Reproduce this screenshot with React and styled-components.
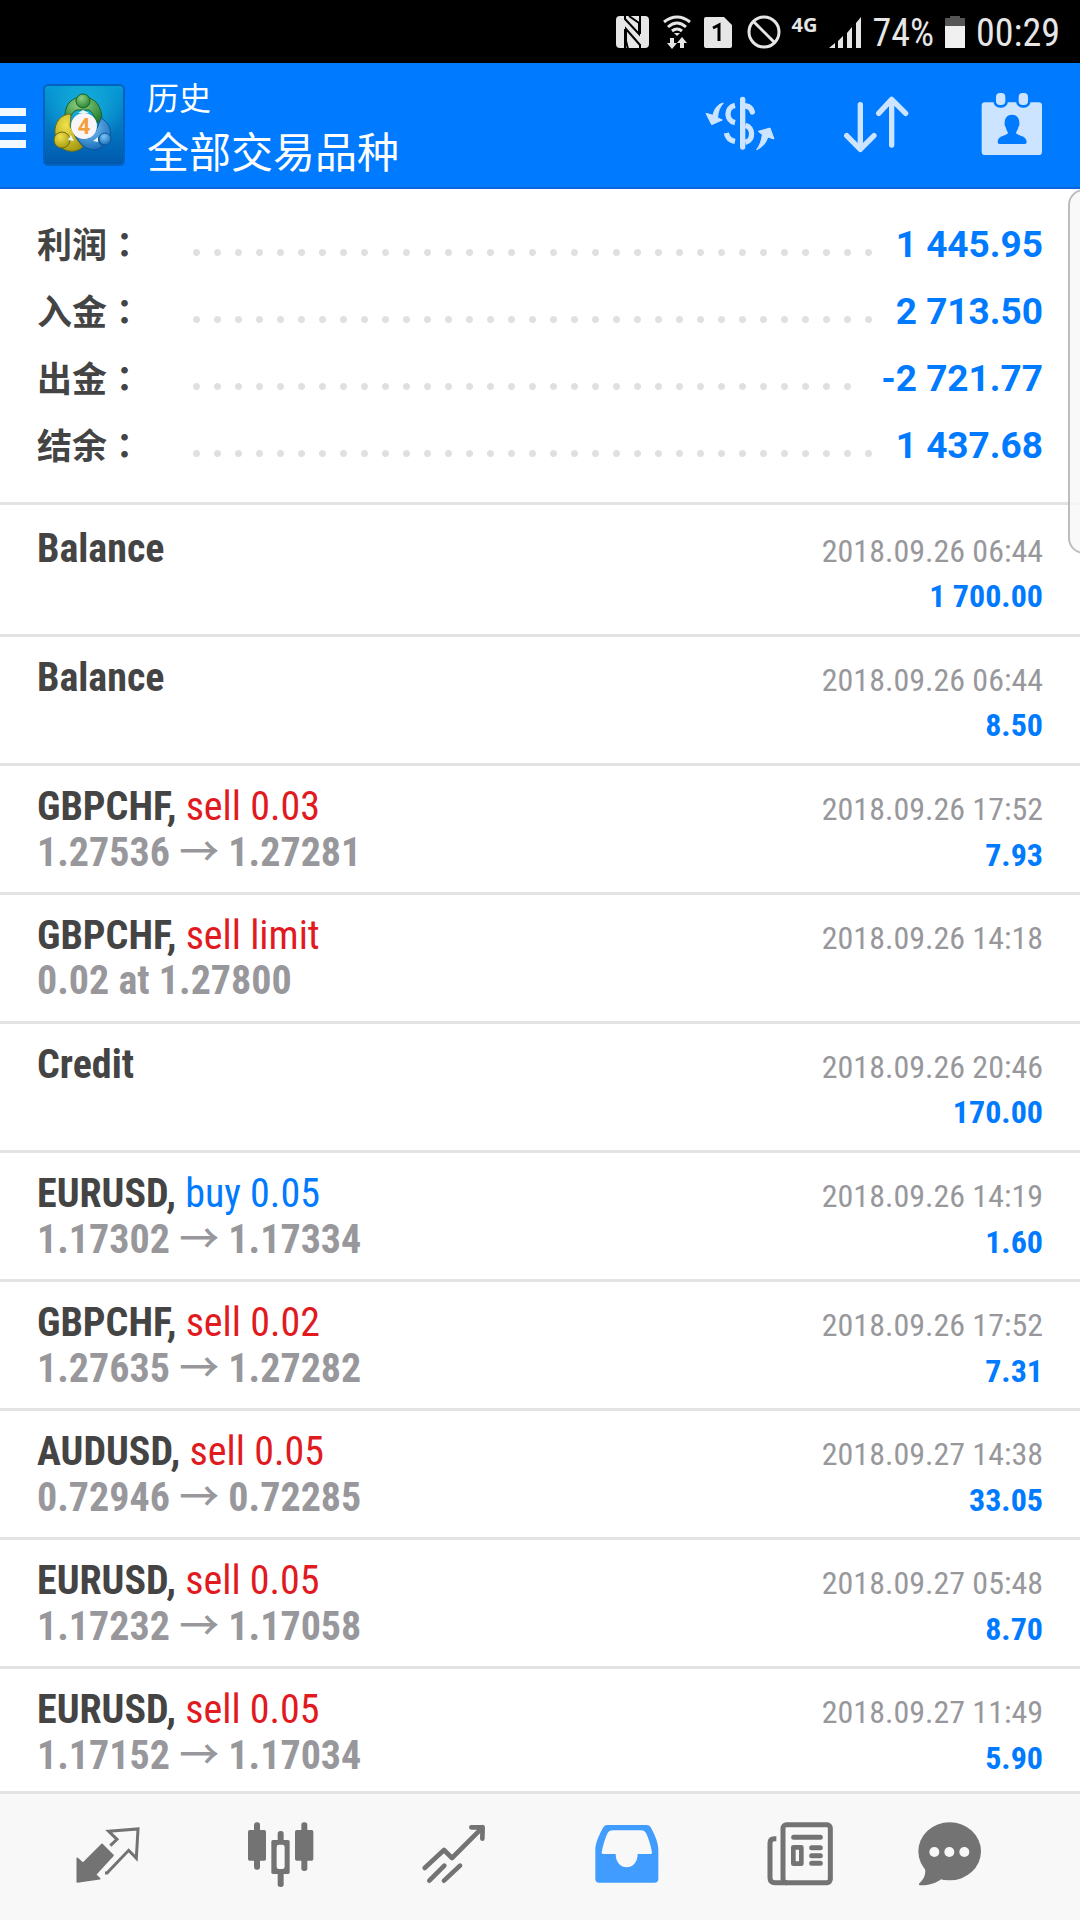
import styled, { createGlobalStyle } from "styled-components";

const summary = [
  { label: "利润", value: "1 445.95" },
  { label: "入金", value: "2 713.50" },
  { label: "出金", value: "-2 721.77" },
  { label: "结余", value: "1 437.68" },
];

const deals = [
  { id: 1, name: "Balance", time: "2018.09.26 06:44", amount: "1 700.00" },
  { id: 2, name: "Balance", time: "2018.09.26 06:44", amount: "8.50" },
  {
    id: 3,
    name: "GBPCHF,",
    type: "sell",
    action: "sell 0.03",
    open: "1.27536",
    close: "1.27281",
    time: "2018.09.26 17:52",
    amount: "7.93",
  },
  {
    id: 4,
    name: "GBPCHF,",
    type: "sell",
    action: "sell limit",
    open: "0.02 at 1.27800",
    time: "2018.09.26 14:18",
  },
  { id: 5, name: "Credit", time: "2018.09.26 20:46", amount: "170.00" },
  {
    id: 6,
    name: "EURUSD,",
    type: "buy",
    action: "buy 0.05",
    open: "1.17302",
    close: "1.17334",
    time: "2018.09.26 14:19",
    amount: "1.60",
  },
  {
    id: 7,
    name: "GBPCHF,",
    type: "sell",
    action: "sell 0.02",
    open: "1.27635",
    close: "1.27282",
    time: "2018.09.26 17:52",
    amount: "7.31",
  },
  {
    id: 8,
    name: "AUDUSD,",
    type: "sell",
    action: "sell 0.05",
    open: "0.72946",
    close: "0.72285",
    time: "2018.09.27 14:38",
    amount: "33.05",
  },
  {
    id: 9,
    name: "EURUSD,",
    type: "sell",
    action: "sell 0.05",
    open: "1.17232",
    close: "1.17058",
    time: "2018.09.27 05:48",
    amount: "8.70",
  },
  {
    id: 10,
    name: "EURUSD,",
    type: "sell",
    action: "sell 0.05",
    open: "1.17152",
    close: "1.17034",
    time: "2018.09.27 11:49",
    amount: "5.90",
  },
];

function StatusBar() {
  return (
    <StyledStatusBar>
      <svg width="33" height="34" viewBox="0 0 33 34">
        <rect x="0" y="1" width="33" height="32" rx="4" fill="#e6e6e6" />
        <path
          d="M9 0V4L23 19V8L13 1M24 34V30L10 14V26L12 34"
          fill="none"
          stroke="#000"
          strokeWidth="2"
        />
        <path d="M24 1V19M9 14V33" fill="none" stroke="#000" strokeWidth="2" />
      </svg>
      <svg width="33" height="34" viewBox="-3 0 33 34" fill="none" stroke="#e6e6e6" strokeWidth="3">
        <path d="M1 7Q14 -3 27 7M5 12Q14 4 23 12M9 16Q14 12 19 16" />
        <path d="M11 18H17L14 21Z" fill="#e6e6e6" stroke="none" />
        <path d="M7 23H11V28H14L9 34L4 28H7ZM17 33H21V28H24L19 22L14 28H17Z" fill="#e6e6e6" stroke="none" />
      </svg>
      <svg width="28" height="34" viewBox="0 0 28 34">
        <path d="M2 2H20L28 10V31Q28 33 26 33H2Q0 33 0 31V4Q0 2 2 2Z" fill="#e6e6e6" />
        <path d="M9 13L15 10V26" fill="none" stroke="#000" strokeWidth="3" />
      </svg>
      <svg width="38" height="34" viewBox="-4 0 38 34" fill="none" stroke="#e6e6e6" strokeWidth="3">
        <circle cx="17" cy="17" r="15" />
        <path d="M7 7L27 27" />
      </svg>
      <StyledNetwork>4G</StyledNetwork>
      <svg width="33" height="34" viewBox="0 0 33 34" fill="#e6e6e6">
        <path d="M0 33L6 28V33ZM9 26L14 21V33H9ZM18 18L23 12V33H18ZM27 8L32 2V33H27Z" />
      </svg>
      <StyledStatusText>74%</StyledStatusText>
      <svg width="20" height="34" viewBox="0 0 20 34">
        <path d="M0 3H5V1H15V3H20V12H0Z" fill="#555" />
        <path d="M0 11H20V33H0Z" fill="#f0f0f0" />
      </svg>
      <StyledStatusText>00:29</StyledStatusText>
    </StyledStatusBar>
  );
}

function Logo() {
  return (
    <svg width="82" height="82" viewBox="0 0 82 82" role="img" aria-label="MetaTrader 4">
      <defs>
        <linearGradient id="tile" x1="0" y1="0" x2="0" y2="1">
          <stop offset="0" stopColor="#069bd6" />
          <stop offset="1" stopColor="#0058ad" />
        </linearGradient>
        <radialGradient id="glow" cx="0.5" cy="0.3" r="0.5">
          <stop offset="0" stopColor="#18b4dc" />
          <stop offset="1" stopColor="#18b4dc" stopOpacity="0" />
        </radialGradient>
        <radialGradient id="green" cx="0.4" cy="0.3" r="0.8">
          <stop offset="0" stopColor="#8fd080" />
          <stop offset="1" stopColor="#1d7a2c" />
        </radialGradient>
        <radialGradient id="yellow" cx="0.4" cy="0.3" r="0.8">
          <stop offset="0" stopColor="#f0e04c" />
          <stop offset="1" stopColor="#a0960e" />
        </radialGradient>
        <radialGradient id="sky" cx="0.4" cy="0.3" r="0.8">
          <stop offset="0" stopColor="#7cc6f4" />
          <stop offset="1" stopColor="#0f64b4" />
        </radialGradient>
      </defs>
      <rect x="1" y="1" width="80" height="80" rx="4" fill="url(#tile)" stroke="#0362c0" strokeWidth="2" />
      <rect x="2" y="2" width="78" height="78" rx="3" fill="url(#glow)" />
      <g strokeWidth="1" strokeLinejoin="round">
        <path
          d="M22 32C22 20 29 13 40 13C52 13 59 22 59 36L54 39C52 34 49 28 46 26H34C31 27 29 29 28 32Z"
          fill="url(#green)"
          stroke="#17622a"
        />
        <path
          d="M28 30C18 30 11 38 12 50L20 52L25 54L26 60L19 64C26 69 34 68 40 63L33 54L27 42Z"
          fill="url(#yellow)"
          stroke="#756e10"
        />
        <path
          d="M58 34C65 38 69 45 67 53L60 50L55 54L57 60L60 62C51 70 38 64 33 52L46 54L53 47Z"
          fill="url(#sky)"
          stroke="#0e559a"
        />
        <circle cx="40" cy="17" r="7" fill="url(#green)" stroke="#17622a" />
        <circle cx="19" cy="56" r="8" fill="url(#yellow)" stroke="#756e10" />
        <circle cx="62" cy="55" r="6" fill="url(#sky)" stroke="#0e559a" />
      </g>
      <path d="M35 29L40 26L46 29ZM25 56L28 51L31 57ZM50 57L55 53L55 58Z" fill="#e8f4f8" />
      <circle cx="41" cy="42" r="13" fill="#f7f5f8" />
      <text x="41" y="50" textAnchor="middle" fontFamily="Roboto" fontWeight="700" fontSize="22" fill="#f2a03c">
        4
      </text>
    </svg>
  );
}

function HeaderActions() {
  return (
    <StyledActions>
      <StyledIconButton type="button" aria-label="货币">
        <svg width="70" height="70" viewBox="0 0 210 210" fill="none" stroke="currentColor" strokeWidth="16">
          <path d="M113 28V171M123 48Q138 50 142 66" strokeLinecap="round" />
          <path d="M90 46C62 52 62 92 90 98M121 106C146 112 146 152 121 157" />
          <path d="M64 129Q68 150 90 154" />
          <path
            d="M55 39C40 42 28 55 24 76L3 70L20 104L52 90L38 84C38 65 45 50 55 39ZM155 179C172 172 184 158 188 141L207 147L195 114L160 124L172 134C170 152 164 166 155 179Z"
            fill="currentColor"
            strokeWidth="3"
            strokeLinejoin="round"
          />
        </svg>
      </StyledIconButton>
      <StyledIconButton type="button" aria-label="排序">
        <svg
          width="70"
          height="70"
          viewBox="0 0 210 210"
          fill="none"
          stroke="currentColor"
          strokeWidth="16"
          strokeLinecap="round"
          strokeLinejoin="round"
        >
          <path d="M58 44V178M17 137L58 178L99 137M152 165V28M113 70L152 28L194 70" />
        </svg>
      </StyledIconButton>
      <StyledIconButton type="button" aria-label="日期">
        <svg width="70" height="70" viewBox="0 0 210 210" fill="currentColor">
          <rect x="14" y="37" width="181" height="158" rx="10" />
          <g stroke="#007aff" strokeWidth="8">
            <rect x="53" y="5" width="36" height="44" rx="16" />
            <rect x="121" y="5" width="36" height="44" rx="16" />
          </g>
          <path
            fill="#007aff"
            d="M105 74C119 74 127 84 127 98C128 104 127 108 124 111C122 120 119 124 117 128C118 138 149 134 149 156Q149 162 144 162H67Q62 162 62 156C62 134 92 138 93 128C91 124 88 120 86 111C83 108 82 104 83 98C83 84 91 74 105 74Z"
          />
        </svg>
      </StyledIconButton>
    </StyledActions>
  );
}

function BottomNav() {
  return (
    <StyledNav>
      <StyledTab href="#quotes" aria-label="行情">
        <svg width="66" height="66" viewBox="0 0 198 198">
          <path
            d="M7 112L24 127L81 70L114 103L61 161L74 173L7 183Z"
            fill="currentColor"
            stroke="currentColor"
            strokeWidth="5"
            strokeLinejoin="round"
          />
          <path
            d="M90 156H96L161 88L184 112L189 24L101 31L126 55L106 74"
            fill="none"
            stroke="currentColor"
            strokeWidth="9"
          />
        </svg>
      </StyledTab>
      <StyledTab href="#charts" aria-label="图表">
        <svg width="66" height="66" viewBox="0 0 198 198" fill="currentColor">
          <rect x="0" y="27" width="54" height="92" rx="5" />
          <rect x="18" y="4" width="18" height="142" rx="8" />
          <rect x="141" y="27" width="55" height="92" rx="5" />
          <rect x="160" y="4" width="18" height="146" rx="8" />
          <rect x="89" y="30" width="18" height="168" rx="8" />
          <rect x="70" y="57" width="55" height="102" rx="5" />
          <rect x="86" y="71" width="24" height="73" rx="7" fill="#f8f8f8" />
        </svg>
      </StyledTab>
      <StyledTab href="#trade" aria-label="交易">
        <svg
          width="66"
          height="66"
          viewBox="0 0 198 198"
          fill="none"
          stroke="currentColor"
          strokeWidth="14"
          strokeLinecap="round"
          strokeLinejoin="round"
        >
          <path d="M11 141L69 87L93 111L185 19M151 19H185L184 53M25 179L70 134M69 179L117 134" />
        </svg>
      </StyledTab>
      <StyledTab href="#history" aria-label="历史" aria-current="page">
        <svg width="66" height="66" viewBox="0 0 198 198">
          <path
            fill="currentColor"
            fillRule="evenodd"
            d="M40 12H158Q166 12 170 19C182 41 193 64 193 88V173Q193 185 181 185H16Q4 185 4 173V88C4 64 16 41 28 19Q32 12 40 12ZM54 28Q45 28 41 36C33 52 27 72 23 94Q22 99 27 99H65C65 152 131 152 131 99H170Q175 99 174 94C170 72 164 52 156 36Q152 28 143 28Z"
          />
        </svg>
      </StyledTab>
      <StyledTab href="#news" aria-label="新闻">
        <svg width="66" height="66" viewBox="0 0 198 198" fill="none" stroke="currentColor" strokeWidth="15">
          <rect x="48" y="11" width="142" height="174" rx="10" />
          <path d="M28 53H22Q9 53 9 66V170Q9 185 24 185H60" />
          <path d="M80 49H160M134 80H160M134 104H160M134 127H160" strokeLinecap="round" />
          <rect x="79" y="79" width="24" height="49" strokeLinejoin="round" strokeWidth="14" />
        </svg>
      </StyledTab>
      <StyledTab href="#messages" aria-label="消息">
        <svg width="66" height="66" viewBox="0 0 198 198" fill="currentColor">
          <ellipse cx="98" cy="91" rx="94" ry="87" />
          <path d="M24 142C28 162 18 178 6 188Q4 193 10 193C36 192 56 188 74 173Z" />
          <g fill="#f8f8f8">
            <circle cx="52" cy="93" r="15" />
            <circle cx="97" cy="93" r="15" />
            <circle cx="142" cy="93" r="15" />
          </g>
        </svg>
      </StyledTab>
    </StyledNav>
  );
}

export default function App() {
  return (
    <>
      <GlobalStyle />
      <StyledScreen lang="zh-Hans">
        <StatusBar />
        <StyledHeader>
          <StyledMenuButton type="button" aria-label="菜单">
            <span />
            <span />
            <span />
          </StyledMenuButton>
          <Logo />
          <StyledTitles>
            <StyledTitle>历史</StyledTitle>
            <StyledSubtitle>全部交易品种</StyledSubtitle>
          </StyledTitles>
          <HeaderActions />
        </StyledHeader>
        <StyledMain>
          <StyledSummary>
            {summary.map((line) => (
              <StyledSummaryLine key={line.label}>
                <StyledSummaryLabel>
                  {line.label}
                  <StyledColon lang="zh-Hant">：</StyledColon>
                </StyledSummaryLabel>
                <StyledDots />
                <StyledSummaryValue>{line.value}</StyledSummaryValue>
              </StyledSummaryLine>
            ))}
          </StyledSummary>
          <StyledDeals>
            {deals.map((deal) => (
              <StyledDeal key={deal.id}>
                <StyledName>
                  {deal.name}
                  {deal.action && (
                    <StyledAction $type={deal.type}> {deal.action}</StyledAction>
                  )}
                </StyledName>
                <StyledTime>{deal.time}</StyledTime>
                <StyledPrice>
                  {deal.open}
                  {deal.close && (
                    <>
                      {" "}
                      <StyledArrow>→</StyledArrow> {deal.close}
                    </>
                  )}
                </StyledPrice>
                <StyledAmount>{deal.amount}</StyledAmount>
              </StyledDeal>
            ))}
          </StyledDeals>
          <StyledEdgePanel />
        </StyledMain>
        <BottomNav />
      </StyledScreen>
    </>
  );
}

const GlobalStyle = createGlobalStyle`
  * {
    box-sizing: border-box;
  }
  body {
    margin: 0;
    background-color: #fff;
    font-family: "Roboto Condensed", Roboto, "Noto Sans CJK SC", sans-serif;
  }
  svg {
    display: block;
    flex-shrink: 0;
  }
`;

const StyledScreen = styled.div`
  display: flex;
  flex-direction: column;
  height: 100vh;
  overflow: hidden;
`;

const StyledStatusBar = styled.div`
  display: flex;
  align-items: center;
  justify-content: flex-end;
  flex-shrink: 0;
  gap: 11px;
  height: 63px;
  padding-right: 20px;
  background-color: #000;
`;
const StyledStatusText = styled.span`
  padding-top: 2px;
  color: #e6e6e6;
  font-size: 38px;
  line-height: 44px;
`;
const StyledNetwork = styled.span`
  align-self: flex-start;
  padding-top: 14px;
  color: #e6e6e6;
  font-family: "Noto Sans", sans-serif;
  font-size: 20px;
  font-weight: 700;
  line-height: 22px;
`;

const StyledHeader = styled.header`
  display: flex;
  align-items: center;
  flex-shrink: 0;
  height: 126px;
  padding-right: 33px;
  border-bottom: 2px solid #0a66e0;
  background-color: #007aff;
`;
const StyledMenuButton = styled.button`
  display: flex;
  flex-direction: column;
  gap: 8px;
  width: 43px;
  padding: 5px 17px 0 0;
  border: 0;
  background: none;
  cursor: pointer;

  span {
    height: 8px;
    background-color: #f2f8ff;
  }
`;
const StyledTitles = styled.div`
  flex: 1;
  padding: 0 0 5px 22px;
  color: #fff;
  font-family: "Noto Sans CJK SC", sans-serif;
`;
const StyledTitle = styled.h1`
  margin: 0;
  font-size: 32px;
  font-weight: 400;
  line-height: 54px;
`;
const StyledSubtitle = styled.p`
  margin: 0;
  font-size: 42px;
  font-weight: 400;
  line-height: 54px;
`;
const StyledActions = styled.div`
  display: flex;
  gap: 66px;
`;
const StyledIconButton = styled.button`
  padding: 0;
  border: 0;
  background: none;
  color: #cce4ff;
  cursor: pointer;
`;

const StyledMain = styled.main`
  position: relative;
  flex: 1;
  min-height: 0;
  overflow: hidden;
`;
const StyledSummary = styled.dl`
  margin: 0;
  padding: 22px 37px 23px;
  border-bottom: 3px solid #e3e3e3;
`;
const StyledSummaryLine = styled.div`
  display: flex;
  align-items: center;
  height: 67px;
`;
const StyledSummaryLabel = styled.dt`
  width: 149px;
  padding-bottom: 4px;
  color: #444;
  font-family: "Noto Sans CJK SC", sans-serif;
  font-size: 35px;
  font-weight: 600;
  line-height: 50px;
`;
const StyledColon = styled.span`
  font-family: "Noto Sans CJK TC", sans-serif;
`;
const StyledDots = styled.span`
  flex: 1;
  align-self: stretch;

  /* only whole dots, whatever the width of the value */
  &::before {
    content: "";
    display: block;
    width: round(down, 100%, 21px);
    height: 100%;
    background: radial-gradient(circle, #e0e0e0 3px, transparent 4px) 0 31px / 21px 21px repeat-x;
  }
`;
const StyledSummaryValue = styled.dd`
  margin: 0;
  padding-left: 14px;
  color: #007aff;
  font-family: Roboto, sans-serif;
  font-size: 37px;
  font-weight: 700;
  line-height: 50px;
`;

const StyledDeals = styled.ul`
  margin: 0;
  padding: 3px 0 0;
  list-style: none;
`;
const StyledDeal = styled.li`
  display: grid;
  grid-template-columns: 1fr auto;
  grid-template-rows: 45px 45px;
  align-items: baseline;
  padding: 18px 37px;
  border-bottom: 3px solid #e3e3e3;
  line-height: 45px;
`;
const StyledName = styled.span`
  color: #444;
  font-size: 40px;
  font-weight: 700;
`;
const StyledAction = styled.span`
  color: ${(props) => (props.$type === "buy" ? "#007aff" : "#e01a1e")};
  font-weight: 400;
`;
const StyledPrice = styled.span`
  color: #98989c;
  font-size: 40px;
  font-weight: 700;

  /* keeps the baseline of the row when there is no price */
  &::before {
    content: "\\200b";
  }
`;
const StyledArrow = styled.span`
  display: inline-block;
  font-family: "Noto Sans CJK SC", sans-serif;
  font-weight: 500;
  line-height: 1;
`;
const StyledTime = styled.time`
  color: #98989c;
  font-size: 32px;
  text-align: right;
`;
const StyledAmount = styled.span`
  color: #007aff;
  font-size: 32px;
  font-weight: 700;
  text-align: right;
`;

const StyledEdgePanel = styled.div`
  position: absolute;
  top: 0;
  right: -20px;
  width: 32px;
  height: 365px;
  border: 2px solid #bdbdbd;
  border-radius: 18px;
  background-color: rgba(248, 248, 248, 0.8);
`;

const StyledNav = styled.nav`
  display: grid;
  grid-template-columns: repeat(5, 173fr) 128fr;
  flex-shrink: 0;
  height: 129px;
  padding: 0 66px 6px 21px;
  border-top: 3px solid #e3e3e3;
  background-color: #f8f8f8;
`;
const StyledTab = styled.a`
  display: flex;
  align-items: center;
  justify-content: center;
  color: #737373;

  &[aria-current="page"] {
    color: #409cff;
  }
`;
